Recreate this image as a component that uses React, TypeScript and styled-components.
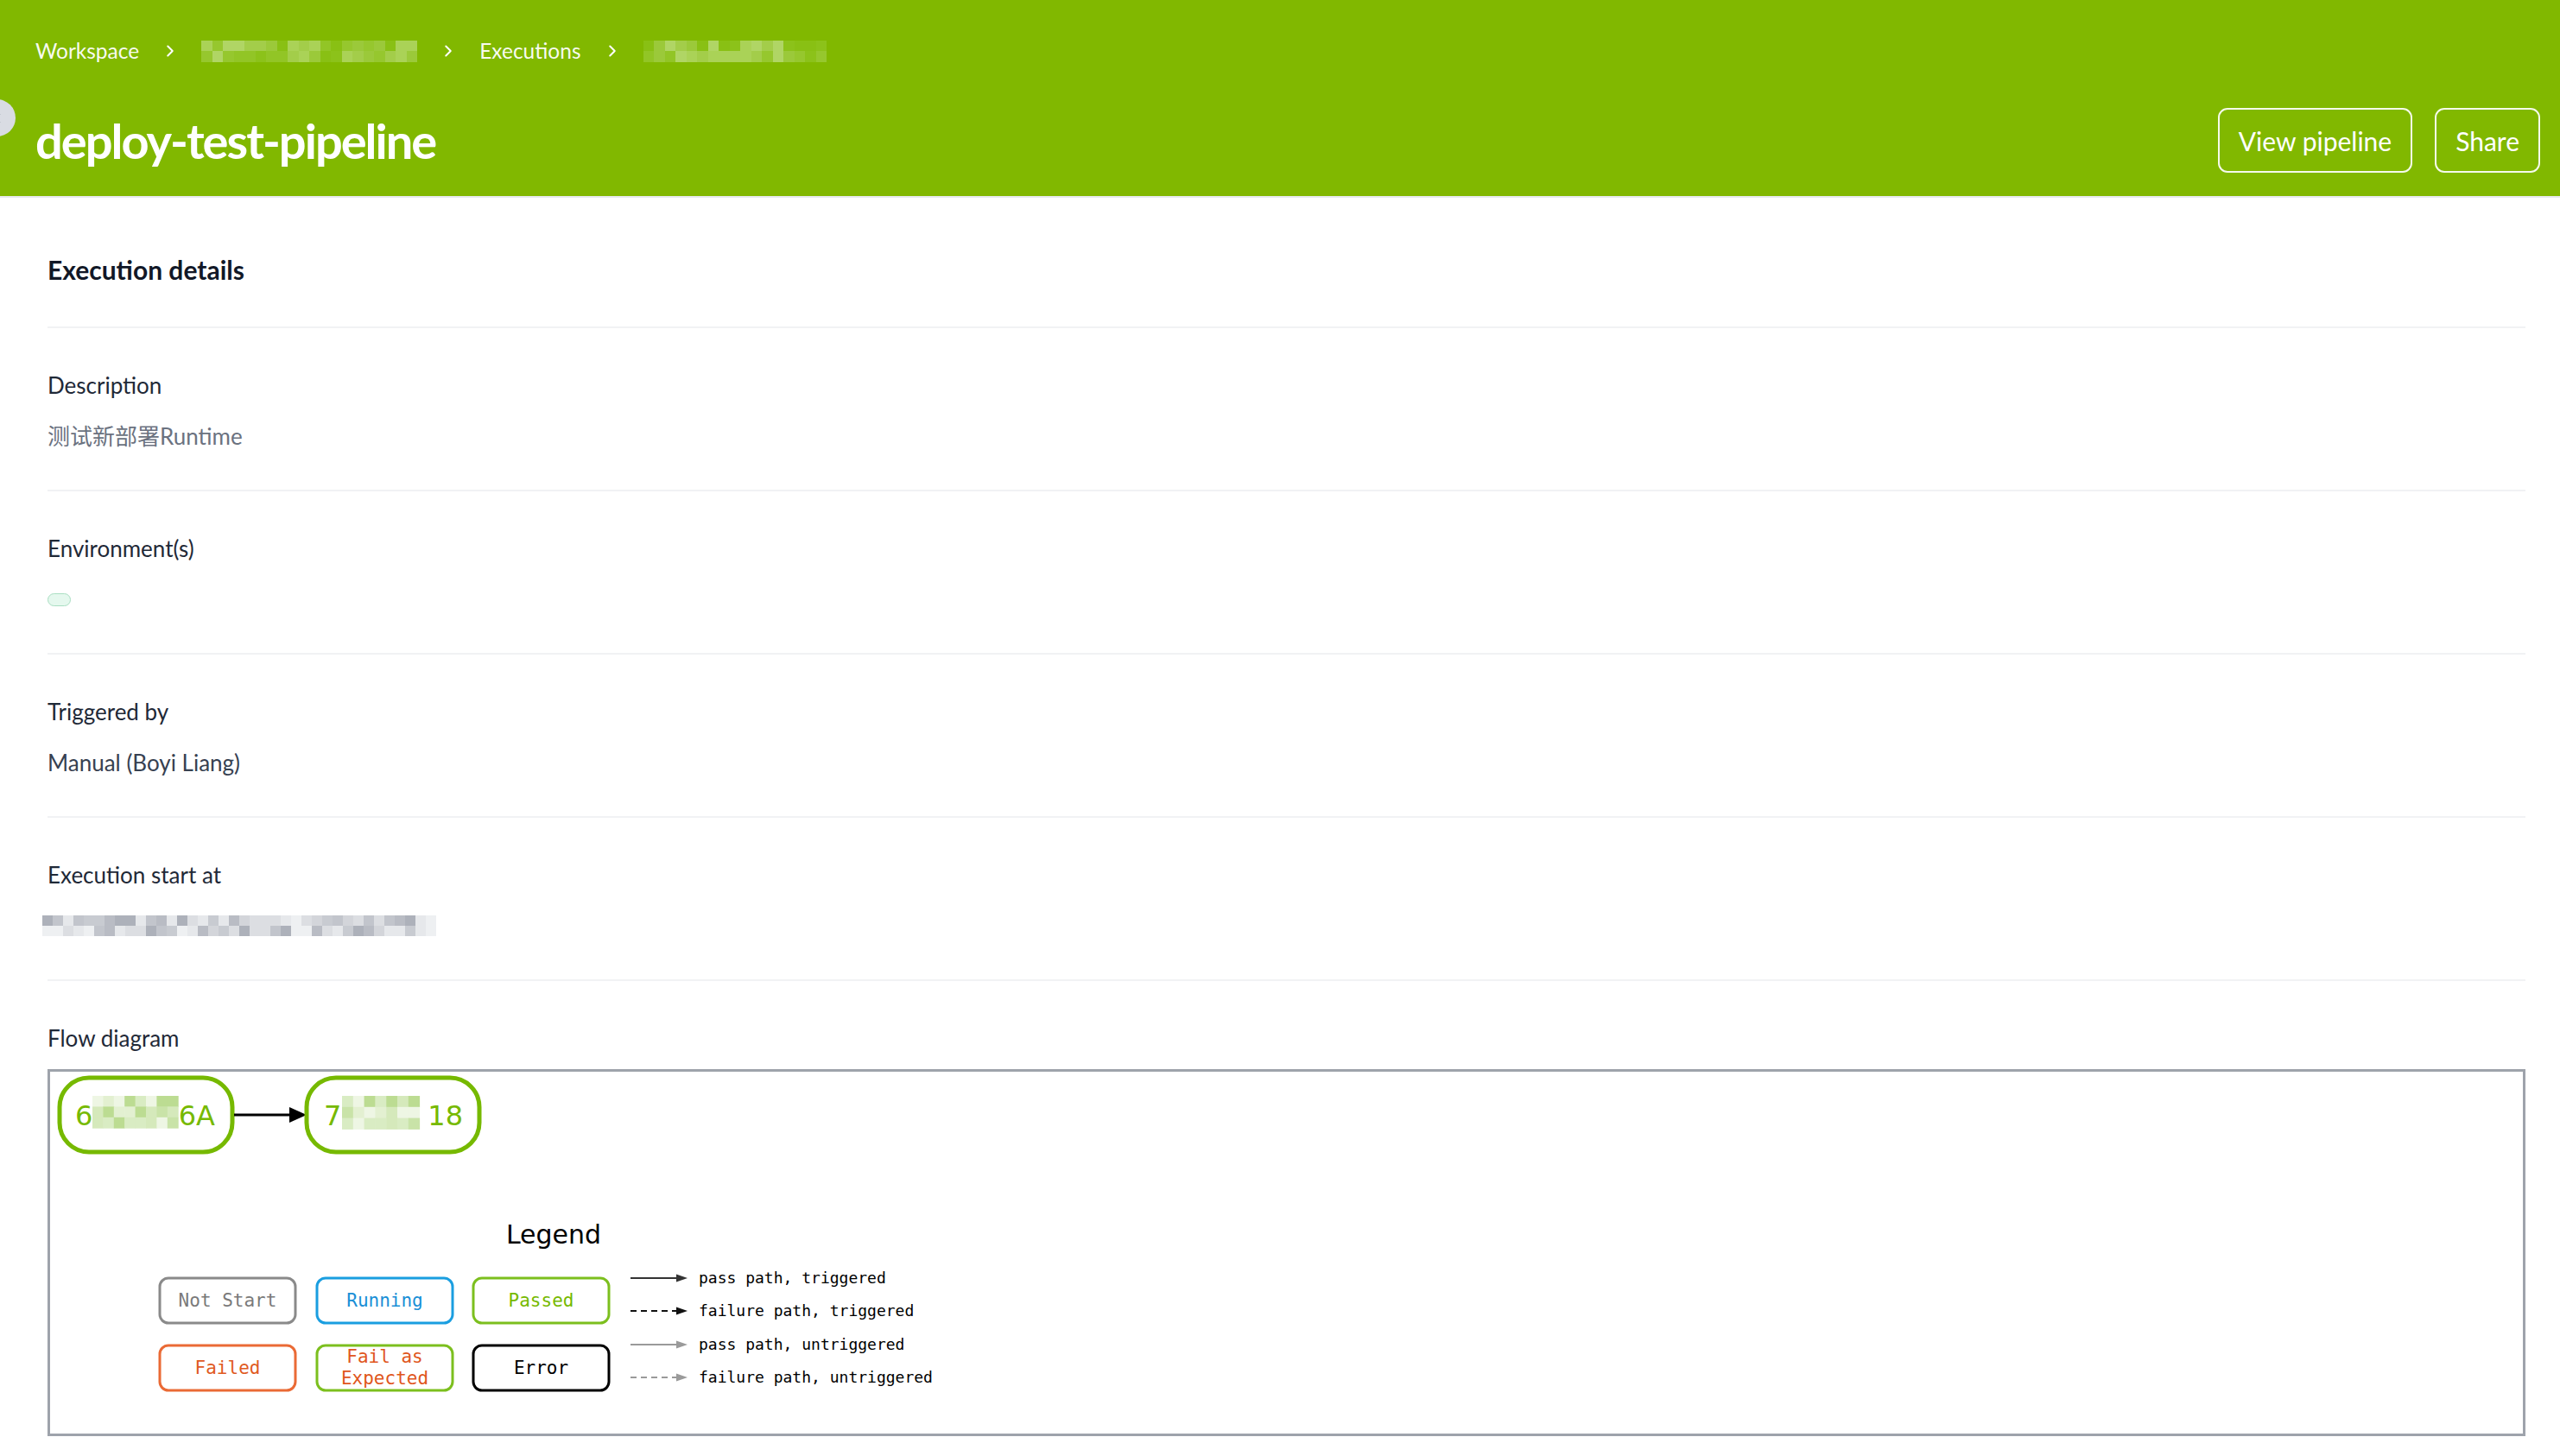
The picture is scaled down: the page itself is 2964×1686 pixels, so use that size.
import React from "react";
import styled, { createGlobalStyle } from "styled-components";
import { ChevronRight, ChevronLeft } from "lucide-react";

const GlobalStyle = createGlobalStyle`
  html, body { margin: 0; padding: 0; background: #ffffff; }
  body {
    font-family: Lato, "Noto Sans", "Noto Sans CJK SC", sans-serif;
    -webkit-font-smoothing: antialiased;
  }
  * { box-sizing: border-box; }
`;

function makeRng(seed: number) {
  let s = seed;
  return () => {
    s = (s * 1103515245 + 12345) & 0x7fffffff;
    return s / 0x7fffffff;
  };
}

function mosaicColors(count: number, palette: string[], seed: number): string[] {
  const r = makeRng(seed);
  return Array.from({ length: count }, () => palette[Math.floor(r() * palette.length)]);
}

const HEADER_PALETTE = ["#8cc21a", "#96c72e", "#a3cd4a", "#9bc93a", "#aad257", "#89c014", "#b0d565", "#92c526"];
const DATE_PALETTE = ["#b9bcc4", "#c8cbd1", "#d3d5da", "#dcdee2", "#e6e8eb", "#eef0f2", "#c2c5cc", "#adb1ba"];
const NODE_PALETTE = ["#d5e9bb", "#e3f0d1", "#c9e3a8", "#eef6e4", "#d9ecc3", "#bcdc92"];

/* ---------- page ---------- */

const Page = styled.div`
  min-height: 100vh;
  background: #ffffff;
  padding-bottom: 40px;
`;

/* ---------- header ---------- */

const Header = styled.header`
  position: relative;
  background: #81b800;
  padding: 40px 23px 27px 41px;
  border-bottom: 2px solid #e8eaed;
  overflow: hidden;
`;

const SideToggle = styled.button`
  position: absolute;
  left: -25px;
  top: 115px;
  width: 43px;
  height: 43px;
  border-radius: 50%;
  border: none;
  background: #d9dce3;
  display: flex;
  align-items: center;
  justify-content: center;
  padding: 0;
  color: #4b5563;
`;

const Breadcrumbs = styled.nav`
  display: flex;
  align-items: center;
  gap: 25px;
  height: 38px;
`;

const Crumb = styled.span`
  font-size: 24.5px;
  color: rgba(255, 255, 255, 0.96);
  line-height: 38px;
`;

const CrumbSep = styled.span`
  display: flex;
  align-items: center;
  color: #ffffff;
  & > svg {
    flex-shrink: 0;
  }
`;

const TitleRow = styled.div`
  margin-top: 47px;
  height: 75px;
  display: flex;
  align-items: center;
  justify-content: space-between;
`;

const Title = styled.h1`
  margin: 0;
  font-size: 56px;
  font-weight: 700;
  color: #ffffff;
  letter-spacing: -2px;
  line-height: 75px;
`;

const Actions = styled.div`
  display: flex;
  gap: 26px;
`;

const OutlineButton = styled.button`
  height: 75px;
  padding: 0 22px;
  border: 2px solid rgba(255, 255, 255, 0.92);
  border-radius: 11px;
  background: transparent;
  color: #ffffff;
  font-family: inherit;
  font-size: 30px;
  line-height: 1;
`;

/* ---------- mosaic (pixelated redaction) ---------- */

const MosaicGrid = styled.span<{ $cols: number; $cell: number; $shift?: number }>`
  display: inline-grid;
  grid-template-columns: repeat(${(p) => p.$cols}, ${(p) => p.$cell}px);
  grid-auto-rows: ${(p) => p.$cell}px;
  vertical-align: middle;
  margin-left: ${(p) => p.$shift ?? 0}px;
`;

const MosaicCell = styled.span<{ $c: string }>`
  background: ${(p) => p.$c};
`;

function Mosaic({
  cols,
  rows,
  cell,
  palette,
  seed,
  shift,
}: {
  cols: number;
  rows: number;
  cell: number;
  palette: string[];
  seed: number;
  shift?: number;
}) {
  const colors = mosaicColors(cols * rows, palette, seed);
  return (
    <MosaicGrid $cols={cols} $cell={cell} $shift={shift} aria-hidden>
      {colors.map((c, i) => (
        <MosaicCell key={i} $c={c} />
      ))}
    </MosaicGrid>
  );
}

/* ---------- details ---------- */

const Content = styled.main`
  padding: 0 40px 0 55px;
`;

const SectionTitle = styled.h2`
  margin: 0;
  padding: 64px 0 47px;
  font-size: 30px;
  line-height: 38px;
  font-weight: 700;
  color: #111827;
  border-bottom: 2px solid #f1f2f4;
`;

const Field = styled.section<{ $last?: boolean }>`
  padding: 47px 0 ${(p) => (p.$last ? 0 : 43)}px;
  border-bottom: ${(p) => (p.$last ? "none" : "2px solid #f1f2f4")};
`;

const FieldLabel = styled.div`
  font-size: 26px;
  line-height: 38px;
  color: #1f2937;
`;

const FieldValue = styled.div<{ $tone?: "muted" | "strong" }>`
  margin-top: 21px;
  font-size: 26px;
  line-height: 38px;
  height: 38px;
  display: flex;
  align-items: center;
  color: ${(p) => (p.$tone === "muted" ? "#6b7280" : "#374151")};
`;

const EnvPill = styled.span`
  display: inline-block;
  width: 27px;
  height: 15px;
  border-radius: 8px;
  border: 1.5px solid #a9dec2;
  background: #e5f8ee;
`;

const DiagramBox = styled.div`
  margin-top: 17px;
  height: 425px;
  border: 3px solid #9ea3ab;
  background: #ffffff;
  overflow: hidden;
`;

const DiagramSvg = styled.svg`
  display: block;
`;

/* ---------- diagram ---------- */

function SvgMosaic({
  x,
  y,
  cols,
  rows,
  cell,
  seed,
}: {
  x: number;
  y: number;
  cols: number;
  rows: number;
  cell: number;
  seed: number;
}) {
  const colors = mosaicColors(cols * rows, NODE_PALETTE, seed);
  return (
    <g>
      {colors.map((c, i) => (
        <rect
          key={i}
          x={x + (i % cols) * cell}
          y={y + Math.floor(i / cols) * cell}
          width={cell + 0.5}
          height={cell + 0.5}
          fill={c}
        />
      ))}
    </g>
  );
}

const GREEN = "#76b900";

const legendBoxes = [
  { x: 130, y: 242, stroke: "#8a8a8a", fill: "#7a7a7a", lines: ["Not Start"] },
  { x: 312, y: 242, stroke: "#1a9ee0", fill: "#1a8fd6", lines: ["Running"] },
  { x: 493, y: 242, stroke: "#7cbf1e", fill: "#76b900", lines: ["Passed"] },
  { x: 130, y: 320, stroke: "#ea6a35", fill: "#e05a1f", lines: ["Failed"] },
  { x: 312, y: 320, stroke: "#7cbf1e", fill: "#e0561c", lines: ["Fail as", "Expected"] },
  { x: 493, y: 320, stroke: "#000000", fill: "#000000", lines: ["Error"] },
];

const legendEdges = [
  { y: 242, color: "#333333", dashed: false, label: "pass path, triggered" },
  { y: 280, color: "#111111", dashed: true, label: "failure path, triggered" },
  { y: 319, color: "#9a9a9a", dashed: false, label: "pass path, untriggered" },
  { y: 357, color: "#9a9a9a", dashed: true, label: "failure path, untriggered" },
];

function FlowDiagram() {
  const BW = 157;
  const BH = 52;
  return (
    <DiagramSvg width={1200} height={419} viewBox="3 3 1200 419">
      {/* node 1 */}
      <rect x={14} y={10} width={200} height={86} rx={34} fill="#ffffff" stroke={GREEN} strokeWidth={5} />
      <text x={32} y={65} fontFamily="DejaVu Sans, sans-serif" fontSize={32} fill={GREEN}>
        6
      </text>
      <SvgMosaic x={52} y={31} cols={8} rows={3} cell={12.4} seed={7} />
      <text x={194} y={65} textAnchor="end" fontFamily="DejaVu Sans, sans-serif" fontSize={32} fill={GREEN}>
        6A
      </text>

      {/* edge */}
      <line x1={216} y1={53} x2={284} y2={53} stroke="#000000" strokeWidth={3} />
      <polygon points="280,44 300,53 280,62" fill="#000000" />

      {/* node 2 */}
      <rect x={300} y={10} width={200} height={86} rx={34} fill="#ffffff" stroke={GREEN} strokeWidth={5} />
      <text x={320} y={65} fontFamily="DejaVu Sans, sans-serif" fontSize={32} fill={GREEN}>
        7
      </text>
      <SvgMosaic x={341} y={31} cols={7} rows={3} cell={12.8} seed={19} />
      <text x={481} y={65} textAnchor="end" fontFamily="DejaVu Sans, sans-serif" fontSize={32} fill={GREEN}>
        18
      </text>

      {/* legend */}
      <text x={586} y={202} textAnchor="middle" fontFamily="DejaVu Sans, sans-serif" fontSize={30} fill="#000000">
        Legend
      </text>

      {legendBoxes.map((b) => (
        <g key={b.lines.join(" ")}>
          <rect
            x={b.x}
            y={b.y}
            width={BW}
            height={BH}
            rx={10}
            fill="#ffffff"
            stroke={b.stroke}
            strokeWidth={3}
          />
          {b.lines.length === 1 ? (
            <text
              x={b.x + BW / 2}
              y={b.y + BH / 2 + 7}
              textAnchor="middle"
              fontFamily="DejaVu Sans Mono, monospace"
              fontSize={21}
              fill={b.fill}
            >
              {b.lines[0]}
            </text>
          ) : (
            b.lines.map((l, i) => (
              <text
                key={l}
                x={b.x + BW / 2}
                y={b.y + 20 + i * 25}
                textAnchor="middle"
                fontFamily="DejaVu Sans Mono, monospace"
                fontSize={21}
                fill={b.fill}
              >
                {l}
              </text>
            ))
          )}
        </g>
      ))}

      {legendEdges.map((e) => (
        <g key={e.label}>
          <line
            x1={675}
            y1={e.y}
            x2={730}
            y2={e.y}
            stroke={e.color}
            strokeWidth={2}
            strokeDasharray={e.dashed ? "7 5" : undefined}
          />
          <polygon points={`${728},${e.y - 4.5} ${741},${e.y} ${728},${e.y + 4.5}`} fill={e.color} />
          <text x={754} y={e.y + 6} fontFamily="DejaVu Sans Mono, monospace" fontSize={18} fill="#000000">
            {e.label}
          </text>
        </g>
      ))}
    </DiagramSvg>
  );
}

export default function App() {
  return (
    <>
      <GlobalStyle />
      <Page>
        <Header>
          <SideToggle aria-label="Toggle sidebar">
            <ChevronLeft size={18} strokeWidth={2.5} />
          </SideToggle>
          <Breadcrumbs>
            <Crumb>Workspace</Crumb>
            <CrumbSep>
              <ChevronRight size={22} strokeWidth={2.2} />
            </CrumbSep>
            <Mosaic cols={20} rows={2} cell={12.5} palette={HEADER_PALETTE} seed={3} />
            <CrumbSep>
              <ChevronRight size={22} strokeWidth={2.2} />
            </CrumbSep>
            <Crumb>Executions</Crumb>
            <CrumbSep>
              <ChevronRight size={22} strokeWidth={2.2} />
            </CrumbSep>
            <Mosaic cols={17} rows={2} cell={12.5} palette={HEADER_PALETTE} seed={11} />
          </Breadcrumbs>
          <TitleRow>
            <Title>deploy-test-pipeline</Title>
            <Actions>
              <OutlineButton>View pipeline</OutlineButton>
              <OutlineButton>Share</OutlineButton>
            </Actions>
          </TitleRow>
        </Header>

        <Content>
          <SectionTitle>Execution details</SectionTitle>

          <Field>
            <FieldLabel>Description</FieldLabel>
            <FieldValue $tone="muted">测试新部署Runtime</FieldValue>
          </Field>

          <Field>
            <FieldLabel>Environment(s)</FieldLabel>
            <FieldValue>
              <EnvPill />
            </FieldValue>
          </Field>

          <Field>
            <FieldLabel>Triggered by</FieldLabel>
            <FieldValue $tone="strong">Manual (Boyi Liang)</FieldValue>
          </Field>

          <Field>
            <FieldLabel>Execution start at</FieldLabel>
            <FieldValue>
              <Mosaic cols={38} rows={2} cell={12} palette={DATE_PALETTE} seed={29} shift={-6} />
            </FieldValue>
          </Field>

          <Field $last>
            <FieldLabel>Flow diagram</FieldLabel>
            <DiagramBox>
              <FlowDiagram />
            </DiagramBox>
          </Field>
        </Content>
      </Page>
    </>
  );
}
